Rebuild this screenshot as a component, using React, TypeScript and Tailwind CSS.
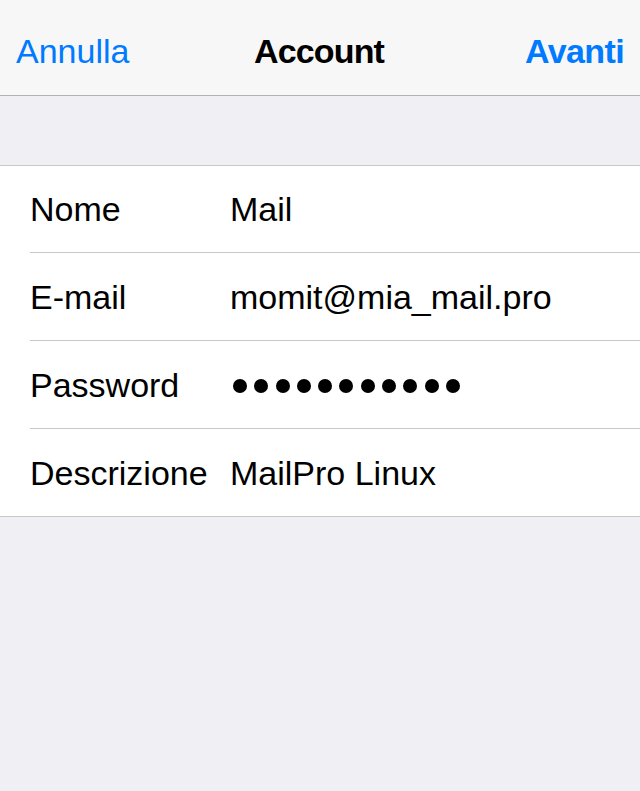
export default function App() {
  const rows = [
    { label: "Nome", value: "Mail" },
    { label: "E-mail", value: "momit@mia_mail.pro" },
    { label: "Password", value: null },
    { label: "Descrizione", value: "MailPro Linux" },
  ];

  return (
    <div
      className="min-h-screen w-full bg-[#efeff4] text-black"
      style={{ fontFamily: '"Liberation Sans", Arial, sans-serif' }}
    >
      {/* Navigation bar */}
      <div className="h-[96px] bg-[#f7f7f7] border-b border-[#b2b2b2] grid grid-cols-[1fr_auto_1fr] items-center px-4 pt-[6px]">
        <button type="button" className="justify-self-start text-[34px] leading-none text-[#007aff]">
          Annulla
        </button>
        <h1 className="text-[34px] leading-none font-bold tracking-[-0.85px] pr-[2px]">Account</h1>
        <button
          type="button"
          className="justify-self-end text-[34px] leading-none font-bold tracking-[-0.6px] text-[#007aff]"
        >
          Avanti
        </button>
      </div>

      {/* Form group */}
      <div className="mt-[69px] bg-white border-y border-[#c8c7cc]">
        {rows.map((row, i) => (
          <div key={row.label} className="pl-[30px]">
            <div
              className={
                i === 0
                  ? "h-[87px] flex items-center border-b border-[#c8c7cc]"
                  : i < rows.length - 1
                    ? "h-[88px] flex items-center border-b border-[#c8c7cc]"
                    : "h-[87px] flex items-center"
              }
            >
              <span className="w-[200px] text-[34px] leading-none">{row.label}</span>
              {row.value ? (
                <span className="text-[34px] leading-none">{row.value}</span>
              ) : (
                <div className="flex gap-[7.3px] pl-[3px] mt-[2px]">
                  {Array.from({ length: 11 }).map((_, j) => (
                    <span key={j} className="w-[14px] h-[14px] rounded-full bg-black" />
                  ))}
                </div>
              )}
            </div>
          </div>
        ))}
      </div>
    </div>
  );
}
